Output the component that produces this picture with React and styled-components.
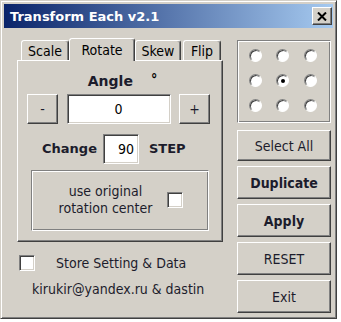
import React, { useState } from 'react'
import styled, { createGlobalStyle, css } from 'styled-components'

const GlobalStyle = createGlobalStyle`
  body {
    margin: 0;
    background: #ffffff;
    font-family: "DejaVu Sans Condensed", "DejaVu Sans", sans-serif;
    font-size: 13px;
    color: #000;
  }
`

const raised = css`
  border: 1px solid;
  border-color: #ffffff #404040 #404040 #ffffff;
  box-shadow: inset -1px -1px 0 #808080, inset 1px 1px 0 #d4d0c8;
`

const sunken = css`
  border: 1px solid;
  border-color: #808080 #ffffff #ffffff #808080;
  box-shadow: inset 1px 1px 0 #404040, inset -1px -1px 0 #d4d0c8;
`

const etched = css`
  border: 1px solid;
  border-color: #808080 #ffffff #ffffff #808080;
  box-shadow: inset 1px 1px 0 #ffffff, inset -1px -1px 0 #808080;
`

const Window = styled.div`
  width: 337px;
  height: 319px;
  box-sizing: border-box;
  background: #d4d0c8;
  border: 1px solid;
  border-color: #d4d0c8 #404040 #404040 #d4d0c8;
  box-shadow: inset 1px 1px 0 #ffffff, inset -1px -1px 0 #808080;
  padding: 3px;
  display: flex;
  flex-direction: column;
`

const TitleBar = styled.div`
  height: 24px;
  background: linear-gradient(to right, #0a246a, #a6caf0);
  display: flex;
  align-items: center;
  justify-content: space-between;
  padding: 0 1px 0 6px;
`

const Title = styled.span`
  color: #fff;
  font-family: "DejaVu Sans", sans-serif;
  font-weight: bold;
  font-size: 13px;
`

const CloseButton = styled.button`
  ${raised};
  width: 20px;
  height: 18px;
  padding: 0;
  background: #d4d0c8;
  display: flex;
  align-items: center;
  justify-content: center;
`

const Body = styled.div`
  display: flex;
  padding: 9px 0 0 13px;
  gap: 14px;
`

const LeftColumn = styled.div`
  width: 206px;
  display: flex;
  flex-direction: column;
`

const TabRow = styled.div`
  display: flex;
  height: 23px;
  align-items: flex-end;
  padding-left: 3px;
  position: relative;
  z-index: 1;
`

const Tab = styled.div`
  box-sizing: border-box;
  width: ${p => p.$w}px;
  height: ${p => (p.$active ? '23px' : '20px')};
  margin: 0 ${p => (p.$active ? '-1px' : '1px')};
  margin-bottom: ${p => (p.$active ? '-1px' : '0')};
  border: 1px solid;
  border-bottom: none;
  border-color: #ffffff #404040 transparent #ffffff;
  box-shadow: inset -1px 0 0 #808080;
  border-radius: 3px 3px 0 0;
  background: #d4d0c8;
  display: flex;
  align-items: center;
  justify-content: center;
  font-size: 14px;
  cursor: default;
`

const Panel = styled.div`
  box-sizing: border-box;
  height: 182px;
  ${raised};
  display: flex;
  flex-direction: column;
  padding: 12px 12px 10px 9px;
`

const AngleRow = styled.div`
  display: flex;
  justify-content: center;
  align-items: baseline;
  gap: 18px;
  padding-left: 8px;
  height: 20px;
`

const BoldLabel = styled.span`
  font-family: "DejaVu Sans", sans-serif;
  font-weight: bold;
  font-size: ${p => p.$size || 13}px;
  color: #1c1c2c;
`

const Degree = styled.span`
  font-size: 14px;
  font-weight: bold;
  position: relative;
  top: -2px;
`

const SpinRow = styled.div`
  display: flex;
  justify-content: space-between;
  margin-top: 1px;
`

const PushButton = styled.button`
  ${raised};
  box-sizing: border-box;
  background: #d4d0c8;
  width: ${p => p.$w || 'auto'};
  height: ${p => p.$h || '30px'};
  font-family: inherit;
  font-size: 14px;
  font-weight: ${p => (p.$bold ? 'bold' : 'normal')};
  color: #1c1c2c;
  padding: 0;
`

const Edit = styled.input`
  ${sunken};
  box-sizing: border-box;
  width: ${p => p.$w};
  height: ${p => p.$h || '30px'};
  background: #fff;
  font-family: inherit;
  font-size: 14px;
  text-align: ${p => p.$align || 'center'};
  padding: 0 4px;
  outline: none;
`

const ChangeRow = styled.div`
  display: flex;
  align-items: center;
  margin-top: 10px;
  padding-left: 15px;
  gap: 6px;
`

const Step = styled(BoldLabel)`
  margin-left: 4px;
`

const GroupBox = styled.div`
  ${etched};
  box-sizing: border-box;
  margin: 6px 1px 0 4px;
  height: 62px;
  display: flex;
  align-items: center;
  padding: 0 25px 0 12px;
`

const GroupText = styled.div`
  flex: 1;
  text-align: center;
  line-height: 17px;
  font-size: 14px;
  color: #1c1c2c;
`

const CheckBox = styled.span`
  ${sunken};
  box-sizing: border-box;
  display: inline-block;
  width: 16px;
  height: 16px;
  background: #fff;
  flex-shrink: 0;
`

const StoreRow = styled.label`
  display: flex;
  align-items: center;
  margin-top: 13px;
  padding-left: 2px;
  gap: 21px;
  font-size: 14px;
  color: #1c1c2c;
`

const Credit = styled.div`
  margin-top: 10px;
  padding-left: 15px;
  font-size: 14px;
  color: #1c1c2c;
`

const RightColumn = styled.div`
  width: 94px;
  display: flex;
  flex-direction: column;
  padding-top: 3px;
`

const RadioBox = styled.div`
  ${etched};
  box-sizing: border-box;
  height: 83px;
  display: grid;
  grid-template-columns: repeat(3, 1fr);
  grid-template-rows: repeat(3, 25px);
  align-content: start;
  justify-items: center;
  align-items: center;
  padding: 2px 6px 0 4px;
  margin-bottom: 7px;
`

const Radio = styled.span`
  box-sizing: border-box;
  width: 13px;
  height: 13px;
  border-radius: 50%;
  background: #fff;
  border: 1px solid;
  border-color: #808080 #ffffff #ffffff #808080;
  box-shadow: inset 1px 1px 0 #404040;
  display: flex;
  align-items: center;
  justify-content: center;
  &::after {
    content: '';
    width: 4px;
    height: 4px;
    border-radius: 50%;
    background: ${p => (p.$on ? '#000' : 'transparent')};
  }
`

const ButtonStack = styled.div`
  display: flex;
  flex-direction: column;
  gap: 5px;
`

const tabs = [
  { name: 'Scale', w: 48 },
  { name: 'Rotate', w: 66 },
  { name: 'Skew', w: 46 },
  { name: 'Flip', w: 38 },
]

export default function App() {
  const [active, setActive] = useState('Rotate')
  const [pivot, setPivot] = useState(4)
  const [angle, setAngle] = useState('0')
  const [step, setStep] = useState('90')

  return (
    <>
      <GlobalStyle />
      <Window>
        <TitleBar>
          <Title>Transform Each v2.1</Title>
          <CloseButton>
            <svg width='10' height='9' viewBox='0 0 10 9'>
              <path d='M1 0.5 L9 8.5 M9 0.5 L1 8.5' stroke='#000' strokeWidth='2' />
            </svg>
          </CloseButton>
        </TitleBar>
        <Body>
          <LeftColumn>
            <TabRow>
              {tabs.map(t => (
                <Tab key={t.name} $w={t.w} $active={t.name === active} onClick={() => setActive(t.name)}>
                  {t.name}
                </Tab>
              ))}
            </TabRow>
            <Panel>
              <AngleRow>
                <BoldLabel $size={14}>Angle</BoldLabel>
                <Degree>°</Degree>
              </AngleRow>
              <SpinRow>
                <PushButton $w='31px' onClick={() => setAngle(String(Number(angle) - Number(step)))}>-</PushButton>
                <Edit $w='104px' value={angle} onChange={e => setAngle(e.target.value)} />
                <PushButton $w='31px' onClick={() => setAngle(String(Number(angle) + Number(step)))}>+</PushButton>
              </SpinRow>
              <ChangeRow>
                <BoldLabel>Change</BoldLabel>
                <Edit $w='36px' $align='right' value={step} onChange={e => setStep(e.target.value)} />
                <Step>STEP</Step>
              </ChangeRow>
              <GroupBox>
                <GroupText>
                  use original
                  <br />
                  rotation center
                </GroupText>
                <CheckBox />
              </GroupBox>
            </Panel>
            <StoreRow>
              <CheckBox />
              Store Setting &amp; Data
            </StoreRow>
            <Credit>kirukir@yandex.ru &amp; dastin</Credit>
          </LeftColumn>
          <RightColumn>
            <RadioBox>
              {Array.from({ length: 9 }, (_, i) => (
                <Radio key={i} $on={i === pivot} onClick={() => setPivot(i)} />
              ))}
            </RadioBox>
            <ButtonStack>
              <PushButton $h='31px'>Select All</PushButton>
              <PushButton $h='33px' $bold>Duplicate</PushButton>
              <PushButton $h='33px' $bold>Apply</PushButton>
              <PushButton $h='33px'>RESET</PushButton>
              <PushButton $h='33px'>Exit</PushButton>
            </ButtonStack>
          </RightColumn>
        </Body>
      </Window>
    </>
  )
}
